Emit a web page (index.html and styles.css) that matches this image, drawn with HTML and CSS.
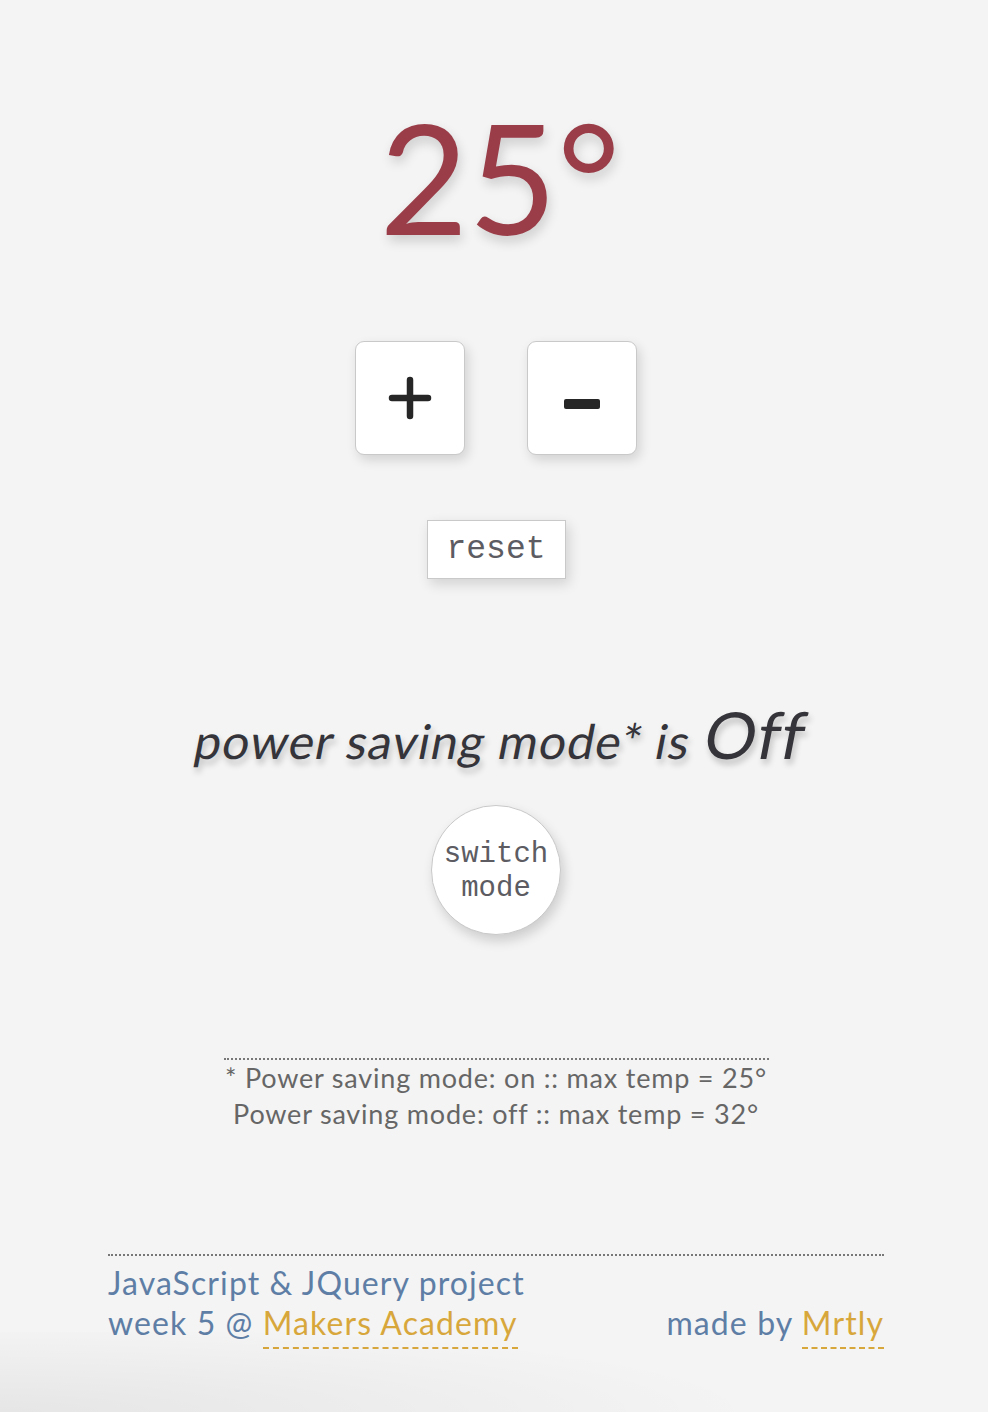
FILE: index.html
```html
<!DOCTYPE html>
<html lang="en">
<head>
<meta charset="utf-8">
<title>Thermostat</title>
<link rel="stylesheet" href="styles.css">
</head>
<body>
<main class="page">
  <section class="display">
    <h1 class="temp">25°</h1>
    <div class="controls">
      <button class="key" aria-label="increase">
        <svg width="44" height="44" viewBox="0 0 44 44"><path d="M22 4V40M4 22H40" stroke="#262626" stroke-width="6.5" stroke-linecap="round" fill="none"/></svg>
      </button>
      <button class="key key-minus" aria-label="decrease">
        <svg width="40" height="12" viewBox="0 0 40 12"><rect x="2" y="1" width="36" height="10" rx="2" fill="#262626"/></svg>
      </button>
    </div>
    <button class="reset">reset</button>
  </section>

  <section class="mode">
    <p class="mode-text">power saving mode* is <span class="state">Off</span></p>
    <button class="switch">switch<br>mode</button>
  </section>

  <section class="note">
    <p>* Power saving mode: on :: max temp = 25°<br>Power saving mode: off :: max temp = 32°</p>
  </section>

  <footer class="footer">
    <div class="footer-left">JavaScript &amp; JQuery project<br>week 5 @ <a class="link" href="#">Makers Academy</a></div>
    <div class="footer-right">made by <a class="link" href="#">Mrtly</a></div>
  </footer>
  <div class="floor"></div>
</main>
</body>
</html>
```

FILE: styles.css
```css
html, body {
  margin: 0;
  padding: 0;
}
body {
  background: #f4f4f4;
  font-family: "Lato", "Noto Sans", sans-serif;
  color: #333;
}
.page {
  display: flex;
  flex-direction: column;
  align-items: center;
  min-height: 1412px;
  padding-left: 4px;
  box-sizing: border-box;
  position: relative;
  overflow: hidden;
}
.display {
  display: flex;
  flex-direction: column;
  align-items: center;
}
.temp {
  margin: 91px 0 0 8px;
  font-size: 153px;
  font-weight: 400;
  line-height: 170px;
  color: #9a3d48;
  text-shadow: 2px 6px 12px rgba(0, 0, 0, 0.16);
}
.controls {
  display: flex;
  gap: 62px;
  margin-top: 80px;
}
.key {
  width: 110px;
  height: 114px;
  background: #fff;
  border: 1px solid #c9c9c9;
  border-radius: 9px;
  box-shadow: 3px 5px 12px rgba(0, 0, 0, 0.14);
  display: flex;
  align-items: center;
  justify-content: center;
  padding: 0;
  cursor: pointer;
}
.key-minus {
  padding-top: 12px;
}
.reset {
  margin-top: 65px;
  width: 139px;
  height: 59px;
  background: #fff;
  border: 1px solid #c9c9c9;
  border-radius: 0;
  box-shadow: 3px 5px 12px rgba(0, 0, 0, 0.14);
  font-family: "Liberation Mono", "Courier New", monospace;
  font-size: 33px;
  color: #5c5c62;
  padding: 0;
}
.mode {
  display: flex;
  flex-direction: column;
  align-items: center;
  margin-top: 120px;
}
.mode-text {
  display: inline-block;
  margin: 0 0 0 10px;
  font-size: 48px;
  letter-spacing: 1.1px;
  line-height: 70px;
  color: #34343a;
  transform: skewX(-11deg);
  text-shadow: 3px 5px 6px rgba(0, 0, 0, 0.22);
}
.state {
  font-size: 65px;
}
.switch {
  margin-top: 29px;
  width: 130px;
  height: 130px;
  border-radius: 50%;
  background: #fff;
  border: 1px solid #c9c9c9;
  box-shadow: 3px 6px 12px rgba(0, 0, 0, 0.16);
  font-family: "Liberation Mono", "Courier New", monospace;
  font-size: 29px;
  line-height: 34px;
  color: #5c5c62;
  padding: 4px 0 0;
}
.note {
  margin-top: 123px;
  width: 545px;
  border-top: 2px dotted #777;
}
.note p {
  margin: 0;
  padding-top: 0;
  text-align: center;
  white-space: nowrap;
  font-size: 27px;
  letter-spacing: 0.8px;
  line-height: 36px;
  color: #666;
}
.footer {
  margin-top: 122px;
  width: 776px;
  border-top: 2px dotted #777;
  display: flex;
  justify-content: space-between;
  align-items: flex-end;
  padding-top: 7px;
  font-size: 32px;
  letter-spacing: 1.1px;
  line-height: 40px;
  color: #5e7ea6;
}
.link {
  color: #d8a73c;
  text-decoration: none;
  border-bottom: 2px dashed #d8a73c;
  padding-bottom: 5px;
}
.floor {
  position: absolute;
  left: 0;
  right: 0;
  bottom: 0;
  height: 80px;
  background: radial-gradient(ellipse 760px 90px at 0% 100%, rgba(0, 0, 0, 0.06), rgba(0, 0, 0, 0) 100%);
  pointer-events: none;
}
```
